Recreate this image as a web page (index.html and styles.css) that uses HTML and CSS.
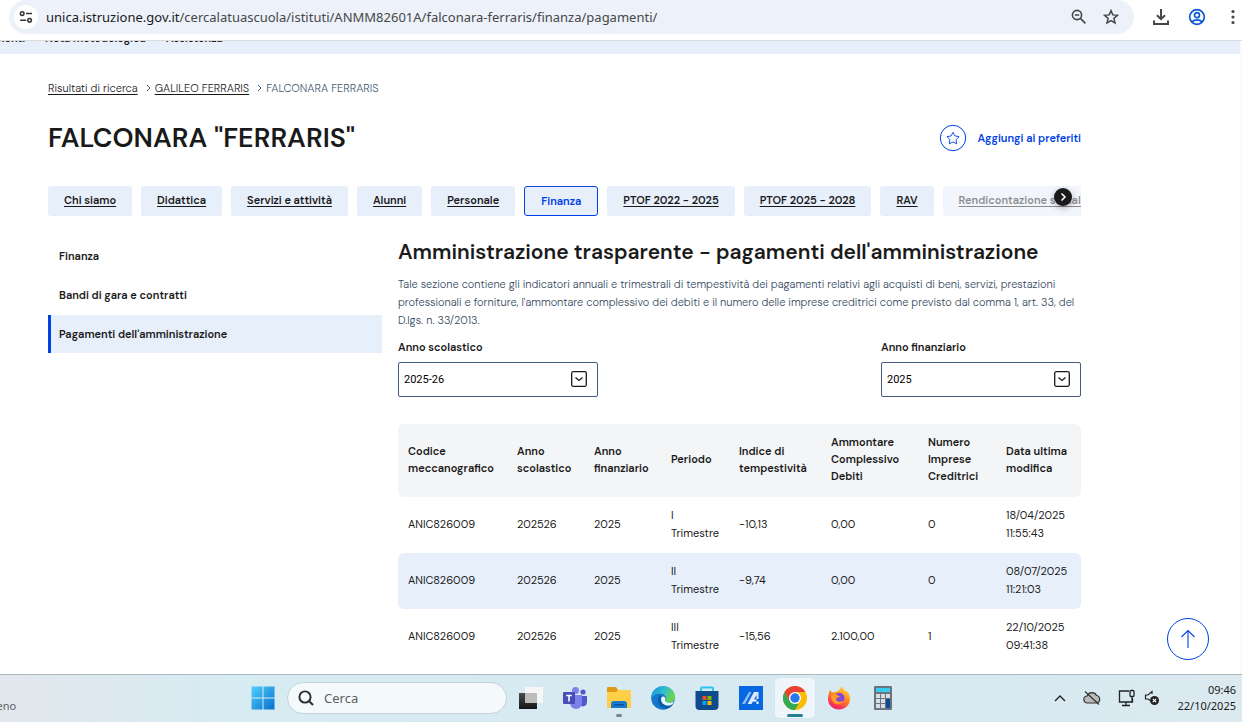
FILE: index.html
```html
<!DOCTYPE html>
<html lang="it">
<head>
    <meta charset="UTF-8">
    <meta name="viewport" content="width=device-width, initial-scale=1.0">
    <title>FALCONARA "FERRARIS" - Pagamenti dell'amministrazione</title>
    <link rel="stylesheet" href="styles.css">
</head>
<body>
    <!-- Browser toolbar -->
    <header class="toolbar">
        <div class="address-bar">
            <button class="site-info" aria-label="Informazioni sul sito">
                <svg width="14" height="14" viewBox="0 0 14 14" fill="none" stroke="#333" stroke-width="1.5">
                    <circle cx="3.2" cy="3.6" r="1.8"/><path d="M7 3.6h6M1.2 10.2h6"/><circle cx="10.6" cy="10.2" r="1.8"/>
                </svg>
            </button>
            <div class="url">unica.istruzione.gov.it<span>/cercalatuascuola/istituti/ANMM82601A/falconara-ferraris/finanza/pagamenti/</span></div>
            <button class="bar-icon" aria-label="Zoom">
                <svg width="16" height="16" viewBox="0 0 16 16" fill="none" stroke="#444746" stroke-width="1.6">
                    <circle cx="6" cy="6" r="4.6"/><path d="M3.8 6h4.4M9.4 9.4l5 5"/>
                </svg>
            </button>
            <button class="bar-icon" aria-label="Preferiti">
                <svg width="16" height="16" viewBox="0 0 16 16" fill="none" stroke="#444746" stroke-width="1.5">
                    <path d="M8 1.6l1.8 4.3 4.7.4-3.6 3 1.1 4.6L8 11.5l-4 2.4 1.1-4.6-3.6-3 4.7-.4z"/>
                </svg>
            </button>
        </div>
        <button class="bar-icon" aria-label="Download">
            <svg width="18" height="18" viewBox="0 0 18 18" fill="none" stroke="#444746" stroke-width="2">
                <path d="M9 1v10M5 7.2l4 4 4-4M2 12.5V16h14v-3.5"/>
            </svg>
        </button>
        <button class="bar-icon" aria-label="Profilo">
            <svg width="18" height="18" viewBox="0 0 18 18" fill="none" stroke="#0b57d0" stroke-width="1.7">
                <circle cx="9" cy="9" r="7.3"/><circle cx="9" cy="7.2" r="2.5"/><path d="M3.9 13.9c2.8-2.6 7.4-2.6 10.2 0"/>
            </svg>
        </button>
        <button class="bar-icon" aria-label="Menu">
            <svg width="18" height="18" viewBox="0 0 18 18" fill="#444746">
                <circle cx="9" cy="3.5" r="1.6"/><circle cx="9" cy="9" r="1.6"/><circle cx="9" cy="14.5" r="1.6"/>
            </svg>
        </button>
    </header>

    <div class="page">
        <nav class="site-nav">
            <a href="#">Strumenti</a>
            <a href="#">Nota metodologica</a>
            <a href="#">Assistenza</a>
        </nav>

        <main class="container">
            <nav class="breadcrumb">
                <a href="#">Risultati di ricerca</a>
                <svg width="5" height="8" viewBox="0 0 5 8"><path d="M1 1l3 3-3 3"/></svg>
                <a href="#">GALILEO FERRARIS</a>
                <svg width="5" height="8" viewBox="0 0 5 8"><path d="M1 1l3 3-3 3"/></svg>
                <span>FALCONARA FERRARIS</span>
            </nav>

            <div class="title-row">
                <h1>FALCONARA "FERRARIS"</h1>
                <button class="favorite">
                    <svg width="28" height="28" viewBox="0 0 28 28" fill="none" stroke="#0041e6">
                        <circle cx="14" cy="14" r="12.7"/>
                        <path d="M14 8.3l1.9 3.6 4.2.8-3 2.9.6 4.2-3.7-1.8-3.7 1.8.6-4.2-3-2.9 4.2-.8z" stroke-width=".9" stroke-linejoin="round"/>
                    </svg>
                    Aggiungi ai preferiti
                </button>
            </div>

            <nav class="tabs">
                <a href="#">Chi siamo</a>
                <a href="#">Didattica</a>
                <a href="#">Servizi e attività</a>
                <a href="#">Alunni</a>
                <a href="#">Personale</a>
                <a href="#" class="active">Finanza</a>
                <a href="#">PTOF 2022 - 2025</a>
                <a href="#">PTOF 2025 - 2028</a>
                <a href="#">RAV</a>
                <a href="#" class="faded">Rendicontazione sociale</a>
                <button class="tabs-next" aria-label="Avanti">
                    <svg width="18" height="18" viewBox="0 0 18 18" fill="none" stroke="#fff" stroke-width="1.5"><path d="M7.5 5.5L11 9l-3.5 3.5"/></svg>
                </button>
            </nav>

            <div class="columns">
                <aside class="side-menu">
                    <a href="#">Finanza</a>
                    <a href="#">Bandi di gara e contratti</a>
                    <a href="#" class="active">Pagamenti dell'amministrazione</a>
                </aside>

                <section class="content">
                    <h2>Amministrazione trasparente - pagamenti dell'amministrazione</h2>
                    <p>Tale sezione contiene gli indicatori annuali e trimestrali di tempestività dei pagamenti relativi agli acquisti di beni, servizi, prestazioni professionali e forniture, l'ammontare complessivo dei debiti e il numero delle imprese creditrici come previsto dal comma 1, art. 33, del D.lgs. n. 33/2013.</p>

                    <div class="filters">
                        <div class="filter">
                            <label for="anno-scolastico">Anno scolastico</label>
                            <div class="select-box">
                                <select id="anno-scolastico"><option>2025-26</option></select>
                                <svg width="16" height="16" viewBox="0 0 16 16" fill="none" stroke="#1a1a1a" stroke-width="1.3"><rect x=".7" y=".7" width="14.6" height="14.6" rx="1.5"/><path d="M4.5 6.5L8 9.5l3.5-3"/></svg>
                            </div>
                        </div>
                        <div class="filter">
                            <label for="anno-finanziario">Anno finanziario</label>
                            <div class="select-box">
                                <select id="anno-finanziario"><option>2025</option></select>
                                <svg width="16" height="16" viewBox="0 0 16 16" fill="none" stroke="#1a1a1a" stroke-width="1.3"><rect x=".7" y=".7" width="14.6" height="14.6" rx="1.5"/><path d="M4.5 6.5L8 9.5l3.5-3"/></svg>
                            </div>
                        </div>
                    </div>

                    <table class="payments">
                        <colgroup>
                            <col class="col-code"><col class="col-year"><col class="col-year"><col class="col-period">
                            <col class="col-index"><col class="col-debt"><col class="col-count"><col>
                        </colgroup>
                        <thead>
                            <tr>
                                <th>Codice meccanografico</th>
                                <th>Anno scolastico</th>
                                <th>Anno finanziario</th>
                                <th>Periodo</th>
                                <th>Indice di tempestività</th>
                                <th>Ammontare Complessivo Debiti</th>
                                <th>Numero Imprese Creditrici</th>
                                <th>Data ultima modifica</th>
                            </tr>
                        </thead>
                        <tbody>
                            <tr>
                                <td>ANIC826009</td><td>202526</td><td>2025</td><td>I<br>Trimestre</td>
                                <td>-10,13</td><td>0,00</td><td>0</td><td>18/04/2025 11:55:43</td>
                            </tr>
                            <tr>
                                <td>ANIC826009</td><td>202526</td><td>2025</td><td>II<br>Trimestre</td>
                                <td>-9,74</td><td>0,00</td><td>0</td><td>08/07/2025 11:21:03</td>
                            </tr>
                            <tr>
                                <td>ANIC826009</td><td>202526</td><td>2025</td><td>III<br>Trimestre</td>
                                <td>-15,56</td><td>2.100,00</td><td>1</td><td>22/10/2025 09:41:38</td>
                            </tr>
                        </tbody>
                    </table>
                </section>
            </div>
        </main>

        <button class="back-top" aria-label="Torna su">
            <svg width="20" height="20" viewBox="0 0 20 20" fill="none" stroke="#0041e6" stroke-width="1.1"><path d="M10 19V1.5M3.5 8L10 1.5 16.5 8"/></svg>
        </button>
    </div>

    <!-- Windows taskbar -->
    <footer class="taskbar">
        <div class="weather">Sereno</div>
        <div class="apps">
            <button class="app" aria-label="Start">
                <svg width="24" height="24" viewBox="0 0 24 24">
                    <defs><linearGradient id="win" x1="0" y1="0" x2="1" y2="1"><stop offset="0" stop-color="#4fd0fc"/><stop offset="1" stop-color="#0670cf"/></linearGradient></defs>
                    <path fill="url(#win)" d="M.5.5h11v11H.5zM12.5.5h11v11h-11zM.5 12.5h11v11H.5zM12.5 12.5h11v11h-11z"/>
                </svg>
            </button>
            <label class="search">
                <svg width="16" height="16" viewBox="0 0 16 16" fill="none" stroke="#2b2b2b" stroke-width="1.9"><circle cx="7" cy="7" r="5.6"/><path d="M11 11l4 4"/></svg>
                <input type="search" placeholder="Cerca" aria-label="Cerca">
            </label>
            <button class="app" aria-label="Visualizzazione attività">
                <svg width="24" height="24" viewBox="0 0 24 24">
                    <defs><linearGradient id="tv" x1="0" y1="0" x2="0" y2="1"><stop offset="0" stop-color="#4c4c4c"/><stop offset="1" stop-color="#151515"/></linearGradient></defs>
                    <path fill="url(#tv)" d="M0 7h18v16H0z"/><path fill="#f6f6f6" d="M6 1h18v16H6z"/><path fill="#bcbcbc" d="M6 7h12v10H6z"/>
                </svg>
            </button>
            <button class="app" aria-label="Teams">
                <svg width="24" height="24" viewBox="0 0 24 24">
                    <circle cx="12.5" cy="4.5" r="3.5" fill="#7b83eb"/><circle cx="20" cy="6" r="2.6" fill="#5059c9"/>
                    <path fill="#5059c9" d="M16 10h8v6.5a4 4 0 0 1-7 2.5z"/><path fill="#7b83eb" d="M7 9h12v8a6 6 0 0 1-12 0z"/>
                    <rect y="6" width="12" height="12" rx="1" fill="#464eb8"/><path fill="none" stroke="#fff" stroke-width="1.6" d="M3.2 9.5h5.6M6 9.5v6"/>
                </svg>
            </button>
            <button class="app open" aria-label="Esplora file">
                <svg width="24" height="24" viewBox="0 0 24 24">
                    <path fill="#dc9b13" d="M0 2q0-1 1-1h8l2 3v4H0z"/><path fill="#ffcf48" d="M0 6h9l2-2h12q1 0 1 1v17H0z"/>
                    <path fill="#1679cf" d="M4 22v-4q0-3 3-3h10q3 0 3 3v4z"/><path fill="#0b529d" d="M7 18h10v1.5H7z"/>
                </svg>
            </button>
            <button class="app" aria-label="Edge">
                <svg width="24" height="24" viewBox="0 0 24 24">
                    <defs>
                        <linearGradient id="edge" x1="0" y1="0" x2="1" y2=".4"><stop offset="0" stop-color="#178fdc"/><stop offset=".55" stop-color="#30bdd2"/><stop offset="1" stop-color="#68d64a"/></linearGradient>
                    </defs>
                    <circle cx="12" cy="12" r="11.8" fill="#1277cd"/>
                    <path fill="url(#edge)" d="M.3 11C1 4.5 6 .2 12.2.2 19 .2 24 5 24 10.8c0 3.8-3 6-6.2 6-2.8 0-4-1-3.5-2 1.8-3.5-.3-7-4.8-7C5 7.8 1.5 9.5.3 13z"/>
                    <path fill="#095ba7" d="M9 9.5c-3 3-2.5 8.5 1.5 11.5 3.5 2.5 8.5 1.5 11-2-5 2-11 .5-11.5-4.5-.1-1.5.2-3 1-4.2z"/>
                    <path fill="#e8f8fb" d="M10.3 11.5c1.5-2 4.5-.5 4 2-.4 1.5 0 2.8 3.5 3.3 2 .2 4-.5 5-1.8-.4 2-1.4 3-2.7 4-4.5 1.8-11.3-1-9.8-7.5z"/>
                </svg>
            </button>
            <button class="app" aria-label="Microsoft Store">
                <svg width="24" height="24" viewBox="0 0 24 24">
                    <path fill="none" stroke="#27c4f4" stroke-width="2" d="M6 6V2.5Q6 1.5 7 1.5h10q1 0 1 1V6"/>
                    <path fill="#124b8b" d="M.5 5h23v15q0 4-4 4h-15q-4 0-4-4z"/>
                    <path fill="#f25022" d="M7.5 10h4v4h-4z"/><path fill="#7fba00" d="M12.5 10h4v4h-4z"/><path fill="#00a4ef" d="M7.5 15h4v4h-4z"/><path fill="#ffb900" d="M12.5 15h4v4h-4z"/>
                </svg>
            </button>
            <button class="app" aria-label="MyASUS">
                <svg width="24" height="24" viewBox="0 0 24 24">
                    <path fill="#0667e0" d="M0 0h24v24H0z"/><path fill="#8fbdf5" d="M3 18l7-12h2.5L6 18z"/><path fill="#dceaff" d="M8.5 18L15 6h4.5v7h-2V9l-5 9z"/><path fill="#fff" d="M14.5 13.5h3v2h-4zM17.5 15.5h2V18h-2z"/>
                </svg>
            </button>
            <button class="app current" aria-label="Chrome">
                <svg width="24" height="24" viewBox="0 0 24 24">
                    <circle cx="12" cy="12" r="12" fill="#fbbc05"/>
                    <path fill="#34a853" d="M12 24A12 12 0 0 1 1.6 6l5.2 9L12 18l3.5-.1z"/>
                    <path fill="#ea4335" d="M1.6 6A12 12 0 0 1 22.4 6H12l-5.2 9z"/>
                    <circle cx="12" cy="12" r="6" fill="#fff"/><circle cx="12" cy="12" r="4.7" fill="#2878ee"/>
                </svg>
            </button>
            <button class="app" aria-label="Firefox">
                <svg width="24" height="24" viewBox="0 0 24 24">
                    <defs><linearGradient id="fox" x1=".8" y1="0" x2=".3" y2="1"><stop offset="0" stop-color="#ffe14a"/><stop offset=".45" stop-color="#ff8a1e"/><stop offset="1" stop-color="#f5156c"/></linearGradient></defs>
                    <path fill="url(#fox)" d="M3 4l2 2.5L8.5 6 12 4.5 14.5 0c1 2.5 3 3.5 4 5.5l1-1c2.5 3 3.5 5 3.5 8.5C23 19 18 23.5 12 23.5S1 19 1 13c0-3.500 1-6.500 2-9z"/>
                    <circle cx="12.5" cy="12" r="5" fill="#8445dc"/><path fill="#ff9a24" d="M4 9c3-2 5-.5 7 .5l2 .8c-1 1.700-3.500 1-4 2.700.5 3 4.500 3.500 7.500 1.500-1.500 4.500-8 5-10.500 1.500C4.500 14 4 11.500 4 9z"/>
                </svg>
            </button>
            <button class="app" aria-label="Calcolatrice">
                <svg width="24" height="24" viewBox="0 0 24 24">
                    <rect x="3" width="18" height="24" rx="1" fill="#69747e"/><path fill="#38cbef" d="M5 2h14v4H5z"/>
                    <path fill="#d9dee2" d="M5 8h4v4H5zM10 8h4v4h-4zM15 8h4v4h-4zM5 13h4v4H5zM10 13h4v4h-4zM5 18h4v4H5zM10 18h4v4h-4z"/><path fill="#0c4a92" d="M15 13h4v9h-4z"/>
                </svg>
            </button>
        </div>
        <div class="tray">
            <svg width="12" height="8" viewBox="0 0 12 8" fill="none" stroke="#222" stroke-width="1.4"><path d="M1 7l5-5 5 5"/></svg>
            <svg width="18" height="16" viewBox="0 0 18 16" fill="#bbb" stroke="#333" stroke-width="1.2"><path d="M4.5 13a3.5 3.5 0 0 1-.3-7A5 5 0 0 1 13.5 5.5 3.8 3.8 0 0 1 13.5 13z"/><path d="M2 1.5l14 13"/></svg>
            <div class="status">
                <svg width="18" height="18" viewBox="0 0 18 18" fill="none" stroke="#222" stroke-width="1.3"><path d="M11 2H1.5v11h13V9.5M8 13v3.5M4 16.5h8M14 8v5"/><rect x="12" y="1.5" width="4" height="6" rx="1"/></svg>
                <svg width="16" height="16" viewBox="0 0 16 16" fill="none" stroke="#222" stroke-width="1.2"><path d="M7 11L4 9H1.5V5H4l4-3.5V4"/><circle cx="10.5" cy="10.5" r="4.5" fill="#222" stroke="none"/><path stroke="#fff" d="M8.8 8.8l3.4 3.4M12.2 8.8l-3.4 3.4"/></svg>
            </div>
            <div class="clock">09:46<br>22/10/2025</div>
        </div>
    </footer>
</body>
</html>
```

FILE: styles.css
```css
* {
    box-sizing: border-box;
}

body {
    margin: 0;
    height: 100vh;
    display: flex;
    flex-direction: column;
    overflow: hidden;
    font-family: "DM Sans", Inter, sans-serif;
    font-size: 11px;
    line-height: 18px;
    color: #1a1a1a;
    background: #fff;
}

a {
    color: inherit;
}

button {
    font: inherit;
    border: none;
    background: none;
    padding: 0;
    cursor: pointer;
}

svg {
    display: block;
    flex-shrink: 0;
}

/* Browser toolbar */
.toolbar {
    flex: none;
    display: flex;
    align-items: flex-start;
    gap: 18px;
    height: 41px;
    padding-left: 9px;
    border-bottom: 1px solid #dcdcdc;
}

.toolbar > .bar-icon {
    height: 34px;
}

.address-bar {
    flex: 1;
    display: flex;
    align-items: center;
    gap: 16px;
    height: 34px;
    padding: 0 15px 0 5px;
    background: #ecf1fa;
    border-radius: 17px;
}

.site-info {
    display: grid;
    place-items: center;
    width: 24px;
    height: 24px;
    background: #fff;
    border-radius: 50%;
}

.url {
    flex: 1;
    margin-left: -8px;
    font-family: "Noto Sans", sans-serif;
    font-size: 13px;
    white-space: nowrap;
}

.url span {
    color: #474747;
}

/* Page */
.page {
    position: relative;
    flex: 1;
    min-height: 0;
    overflow: hidden;
    border-right: 2px solid #fafafa;
}

.site-nav {
    display: flex;
    align-items: flex-end;
    gap: 20px;
    height: 13px;
    margin-left: -28px;
    padding-bottom: 7px;
    overflow: hidden;
    background: #e7effb;
    font-weight: 600;
}

.site-nav a {
    text-decoration: none;
}

.container {
    padding: 25px 159px 0 48px;
}

.breadcrumb {
    display: flex;
    align-items: center;
    gap: 4px;
    font-weight: 300;
}

.breadcrumb svg {
    margin-left: 4px;
    fill: none;
    stroke: #455a70;
}

.breadcrumb a,
.tabs a {
    text-underline-offset: 2px;
}

.breadcrumb span {
    color: #455a70;
}

.title-row {
    display: flex;
    justify-content: space-between;
    align-items: center;
    height: 36px;
    margin: 23px 0 30px;
}

h1 {
    margin: 0;
    font-size: 27px;
    line-height: 36px;
    font-weight: 600;
}

.favorite {
    display: flex;
    align-items: center;
    gap: 10px;
    color: #0041e6;
    font-weight: 600;
}

.tabs {
    position: relative;
    display: flex;
    gap: 9px;
    overflow: hidden;
}

.tabs a {
    flex: none;
    height: 30px;
    padding: 0 16px;
    line-height: 28px;
    font-weight: 600;
    background: #e7effb;
    border-radius: 3px;
}

.tabs .active {
    color: #0041e6;
    border: 1px solid #0041e6;
    text-decoration: none;
}

.tabs .faded {
    opacity: 0.5;
}

.tabs-next {
    position: absolute;
    top: 2px;
    right: 9px;
    width: 18px;
    height: 18px;
    background: #1a1a1a;
    border-radius: 50%;
    box-shadow: 0 2px 6px rgba(0, 0, 0, 0.3);
}

.columns {
    display: grid;
    grid-template-columns: 334px 1fr;
    gap: 16px;
    margin-top: 21px;
}

.side-menu a {
    display: block;
    height: 38px;
    margin-bottom: 1px;
    padding-left: 8px;
    border-left: 3px solid transparent;
    line-height: 38px;
    font-weight: 600;
    text-decoration: none;
}

.side-menu .active {
    background: #e7effb;
    border-left-color: #0041e6;
}

h2 {
    margin: 0 0 8px;
    font-size: 21px;
    line-height: 30px;
    font-weight: 600;
    white-space: nowrap;
}

p {
    margin: 0 0 9px;
    color: #364b62;
    font-weight: 300;
}

.filters {
    display: flex;
    justify-content: space-between;
    margin-bottom: 27px;
}

.filter {
    width: 200px;
}

.filter label {
    display: block;
    margin-bottom: 6px;
    font-weight: 600;
}

.select-box {
    position: relative;
}

.select-box select {
    appearance: none;
    display: block;
    width: 100%;
    height: 35px;
    padding: 0 5px;
    font: 11px Roboto, sans-serif;
    color: #000;
    background: #fff;
    border: 1px solid #455a80;
    border-radius: 2px;
}

.select-box svg {
    position: absolute;
    top: 9px;
    right: 11px;
    pointer-events: none;
}

.payments {
    width: 100%;
    table-layout: fixed;
    border-collapse: separate;
    border-spacing: 0;
}

.col-code { width: 109px; }
.col-year { width: 77px; }
.col-period { width: 68px; }
.col-index { width: 92px; }
.col-debt { width: 97px; }
.col-count { width: 78px; }

.payments th,
.payments td {
    padding: 9px 0 11px 10px;
    text-align: left;
    vertical-align: middle;
}

.payments th {
    padding: 10px 0 12px 10px;
    line-height: 17px;
    font-weight: 600;
    background: #f3f5f7;
}

.payments tr:nth-child(even) td {
    background: #e7effb;
}

.payments th:first-child,
.payments td:first-child {
    border-radius: 6px 0 0 6px;
}

.payments th:last-child,
.payments td:last-child {
    border-radius: 0 6px 6px 0;
}

.back-top {
    position: absolute;
    right: 31px;
    bottom: 14px;
    display: grid;
    place-items: center;
    width: 42px;
    height: 42px;
    border: 1px solid #0041e6;
    border-radius: 50%;
    background: #fff;
}

/* Taskbar */
.taskbar {
    flex: none;
    display: flex;
    align-items: center;
    height: 48px;
    padding-bottom: 1px;
    border-top: 1px solid #a9b8bd;
    background: linear-gradient(90deg, #e2e7ec, #d7ebf2 18%, #d7e9f1 80%, #dceaf0);
    font-family: "Noto Sans", sans-serif;
}

.weather {
    width: 243px;
    padding-top: 16px;
    color: #5c6468;
    text-indent: -20px;
}

.apps {
    display: flex;
    align-items: center;
    gap: 4px;
}

.app {
    position: relative;
    display: grid;
    place-items: center;
    width: 40px;
    height: 40px;
    border-radius: 4px;
}

.app.current {
    background: #eef6fb;
    box-shadow: 0 0 1px #b5c5cc;
}

.app.open::after,
.app.current::after {
    content: "";
    position: absolute;
    bottom: 1px;
    width: 6px;
    height: 3px;
    background: #7d868a;
    border-radius: 2px;
}

.app.current::after {
    width: 16px;
    background: #247f92;
}

.search {
    display: flex;
    align-items: center;
    gap: 10px;
    width: 220px;
    height: 32px;
    padding: 0 10px;
    background: #f4f9fc;
    border: 1px solid #c2d2d8;
    border-radius: 16px;
}

.search input {
    flex: 1;
    min-width: 0;
    padding: 0;
    border: none;
    outline: none;
    background: none;
    font: 13px "Noto Sans", sans-serif;
}

.search input::placeholder {
    color: #5f5f5f;
}

.tray {
    display: flex;
    align-items: center;
    gap: 17px;
    margin-left: auto;
    padding-right: 6px;
}

.status {
    display: flex;
    align-items: center;
    gap: 8px;
}

.clock {
    line-height: 16px;
    text-align: right;
}
```
